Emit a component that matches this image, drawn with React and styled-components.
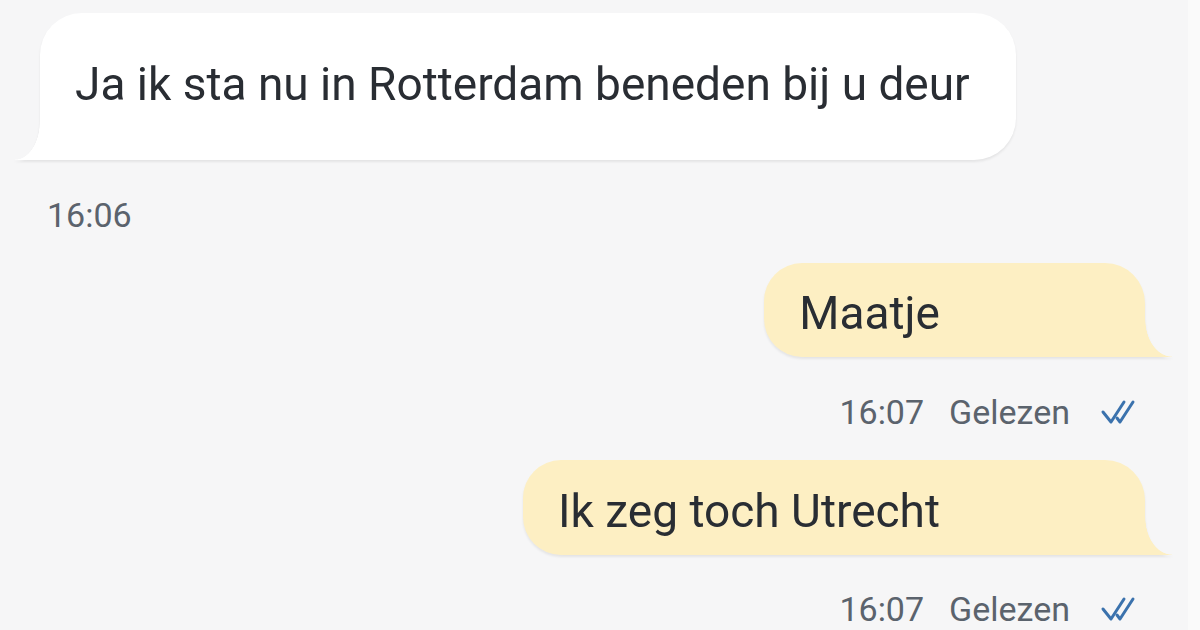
import React from "react";
import styled, { createGlobalStyle } from "styled-components";

const Global = createGlobalStyle`
  html, body { margin: 0; padding: 0; background: #f6f6f7; }
  body { font-family: Roboto, "Noto Sans", sans-serif; }
`;

const Screen = styled.div`
  width: 1200px;
  height: 630px;
  overflow: hidden;
  box-sizing: border-box;
  padding: 13px 0 0 0;
  display: flex;
  flex-direction: column;
  background: #f6f6f7;
  border-right: 12px solid #fafafa;
`;

const Row = styled.div`
  display: flex;
  justify-content: ${(p) => (p.$out ? "flex-end" : "flex-start")};
  padding: ${(p) => (p.$out ? "0 43px 0 0" : "0 0 0 40px")};
  margin-top: ${(p) => p.$top || 0}px;
`;

const Bubble = styled.div`
  position: relative;
  box-sizing: border-box;
  height: ${(p) => p.$h}px;
  display: flex;
  align-items: center;
  padding: ${(p) => (p.$out ? "6px 205px 0 35px" : "0 46px 6px 35px")};
  background: ${(p) => (p.$out ? "#fdefc3" : "#ffffff")};
  border-radius: ${(p) => (p.$out ? "38px 40px 0 38px" : "42px 42px 42px 0")};
  filter: drop-shadow(0 2px 1px rgba(0, 0, 0, 0.07));
  color: #292d33;
  font-size: 46px;
  line-height: 54px;
  white-space: nowrap;

  &::after {
    content: "";
    position: absolute;
    bottom: 0;
    height: 38px;
    ${(p) =>
      p.$out
        ? `right: -27px; width: 27px;
           background: radial-gradient(ellipse 27px 38px at 100% 0, transparent 98%, #fdefc3 100%);`
        : `left: -25px; width: 25px;
           background: radial-gradient(ellipse 25px 38px at 0 0, transparent 98%, #ffffff 100%);`}
  }
`;

const Meta = styled.div`
  display: flex;
  align-items: center;
  justify-content: ${(p) => (p.$out ? "flex-end" : "flex-start")};
  gap: 25px;
  padding: ${(p) => (p.$out ? "0 50px 0 0" : "0 0 0 47px")};
  margin-top: ${(p) => p.$top}px;
  color: #5b636d;
  font-size: 34px;
  line-height: 40px;
`;

const Check = styled.svg`
  width: 38px;
  height: 26px;
  margin-left: 5px;
`;

function DoubleCheck() {
  return (
    <Check viewBox="0 0 38 26" fill="none" stroke="#3b72ad" strokeWidth="3" strokeLinecap="round" strokeLinejoin="round">
      <path d="M3 13 L11 23 L24 3" />
      <path d="M17 19 L20 23 L33 3" />
    </Check>
  );
}

export default function App() {
  return (
    <>
      <Global />
      <Screen>
        <Row>
          <Bubble $h={147}>Ja ik sta nu in Rotterdam beneden bij u deur</Bubble>
        </Row>
        <Meta $top={35}>16:06</Meta>
        <Row $out $top={28}>
          <Bubble $out $h={94}>Maatje</Bubble>
        </Row>
        <Meta $out $top={35}>
          <span>16:07</span>
          <span>Gelezen</span>
          <DoubleCheck />
        </Meta>
        <Row $out $top={28}>
          <Bubble $out $h={95}>Ik zeg toch Utrecht</Bubble>
        </Row>
        <Meta $out $top={34}>
          <span>16:07</span>
          <span>Gelezen</span>
          <DoubleCheck />
        </Meta>
      </Screen>
    </>
  );
}
